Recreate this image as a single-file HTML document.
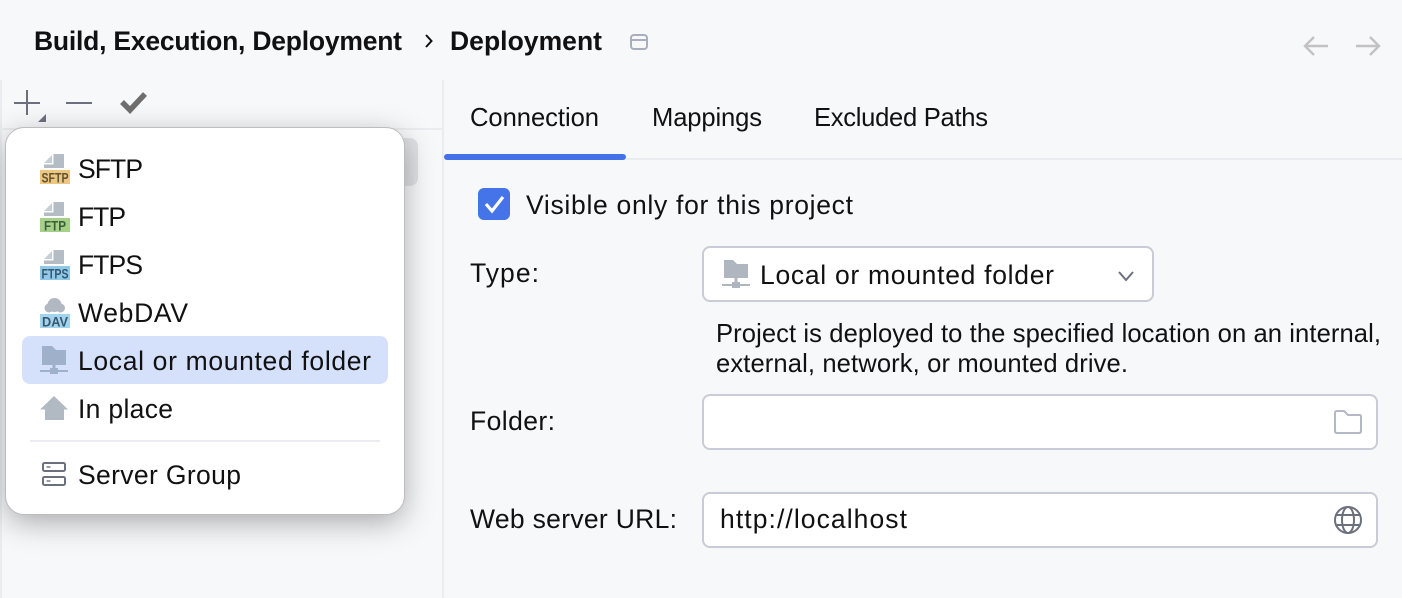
<!DOCTYPE html>
<html><head><meta charset="utf-8"><style>
html,body{margin:0;padding:0;background:#f7f8fa;width:1402px;height:598px;overflow:hidden}
svg{display:block}
text{font-family:"Liberation Sans",sans-serif;font-size:26.5px;fill:#111}
.t{font-size:25.6px}
.b{font-weight:700;font-size:26.5px;fill:#111}
.l{font-weight:700;font-size:13.5px}
</style></head><body>
<svg width="1402" height="598" viewBox="0 0 1402 598" xmlns="http://www.w3.org/2000/svg">
<defs>
<filter id="sh" x="-20%" y="-20%" width="140%" height="150%"><feDropShadow dx="0" dy="8" stdDeviation="15" flood-color="#000" flood-opacity=".32"/></filter>
<g id="doc"><path d="M53.500 154H64V168H44V164.500H53.500Z" fill="#b4bcc6"/><path d="M44 163L52 155V163Z" fill="#c8ced6"/></g>
</defs>
<rect width="1402" height="598" fill="#f7f8fa"/>
<rect x="0" y="80" width="2" height="518" fill="#ebecf0"/>
<!-- title -->
<text class="b" x="34" y="50" textLength="368" lengthAdjust="spacing">Build, Execution, Deployment</text>
<path d="M426 35L431.500 41L426 47" fill="none" stroke="#111" stroke-width="2"/>
<text class="b" x="450" y="50" textLength="152" lengthAdjust="spacing">Deployment</text>
<g fill="none" stroke="#a8aebd" stroke-width="2"><rect x="631" y="35" width="16" height="14" rx="3"/><path d="M631 40H647"/></g>
<g fill="none" stroke="#c2c2c2" stroke-width="2.400"><path d="M1305 46H1328M1314 37L1305 46L1314 55"/><path d="M1379 46H1356M1370 37L1379 46L1370 55"/></g>
<!-- dividers -->
<rect x="442" y="80" width="2" height="518" fill="#ebecf0"/>
<rect x="0" y="128" width="443" height="2" fill="#ebecf0"/>
<rect x="626" y="158" width="776" height="2" fill="#ebecf0"/>
<rect x="444" y="154" width="182" height="6" rx="3" fill="#4571e8"/>
<!-- toolbar -->
<path d="M14 103H40M27 90V115M66 103H92" stroke="#6c707e" stroke-width="2" fill="none"/>
<path d="M46 114V122H38Z" fill="#6c707e"/>
<path d="M122 102L130 110L145 94" stroke="#6e6e6e" stroke-width="5.500" fill="none"/>
<!-- tabs -->
<text class="t" x="470" y="126" textLength="129" lengthAdjust="spacing">Connection</text>
<text class="t" x="652" y="126" textLength="110" lengthAdjust="spacing">Mappings</text>
<text class="t" x="814" y="126" textLength="174" lengthAdjust="spacing">Excluded Paths</text>
<!-- list selection behind popup -->
<rect x="380" y="138" width="38" height="48" rx="8" fill="#dfe1e5"/>
<!-- popup -->
<rect x="6" y="128" width="398" height="386" rx="18" fill="#fff" filter="url(#sh)"/>
<rect x="5.500" y="127.500" width="399" height="387" rx="18.500" fill="#fff" stroke="#bdbdc0"/>
<rect x="22" y="336" width="366" height="48" rx="8" fill="#d5e1fb"/>
<!-- menu items -->
<use href="#doc"/>
<rect x="40" y="170" width="30" height="14" fill="#edc67f"/>
<text class="l" x="41.500" y="182.500" style="fill:#5f5238" textLength="27" lengthAdjust="spacingAndGlyphs">SFTP</text>
<text x="78" y="178" textLength="65" lengthAdjust="spacing">SFTP</text>
<use href="#doc" y="48"/>
<rect x="40" y="218" width="30" height="14" fill="#a5d08a"/>
<text class="l" x="44" y="230.500" style="fill:#3f5c3a" textLength="22" lengthAdjust="spacingAndGlyphs">FTP</text>
<text x="78" y="226" textLength="48" lengthAdjust="spacing">FTP</text>
<use href="#doc" y="96"/>
<rect x="40" y="266" width="30" height="14" fill="#90c9e8"/>
<text class="l" x="41.500" y="278.500" style="fill:#38566e" textLength="27" lengthAdjust="spacingAndGlyphs">FTPS</text>
<text x="78" y="274" textLength="65" lengthAdjust="spacing">FTPS</text>
<g fill="#b1b8c2"><circle cx="54.500" cy="305" r="7"/><circle cx="49" cy="308" r="4.500"/><circle cx="60.500" cy="308" r="4.500"/></g>
<rect x="40" y="314" width="30" height="14" fill="#a2d4ee"/>
<text class="l" x="42" y="326.500" style="fill:#38566e" textLength="26" lengthAdjust="spacingAndGlyphs">DAV</text>
<text x="78" y="322" textLength="110" lengthAdjust="spacing">WebDAV</text>
<path d="M42 346H52L56 350H66V365H55.500V368H58V370H68V372H58V374H50V372H40V370H50V368H52.500V365H42Z" fill="#9fb0cb"/>
<text x="78" y="370" textLength="293" lengthAdjust="spacing">Local or mounted folder</text>
<path d="M54 396L68 409.500H64V420H45V409.500H40Z" fill="#b1b9c3"/>
<text x="78" y="418" textLength="95" lengthAdjust="spacing">In place</text>
<rect x="30" y="440" width="350" height="2" fill="#ebecf0"/>
<g fill="none" stroke="#6c707e" stroke-width="2"><rect x="43" y="463" width="22" height="8" rx="1.500"/><rect x="43" y="477" width="22" height="8" rx="1.500"/></g>
<path d="M46.500 467H50.500M46.500 481H50.500" stroke="#9a9eaa" stroke-width="2" fill="none"/>
<text x="78" y="484" textLength="163" lengthAdjust="spacing">Server Group</text>
<!-- checkbox -->
<rect x="478" y="188" width="32" height="32" rx="6" fill="#4574e8"/>
<path d="M486 204L492 211L503 197" fill="none" stroke="#fff" stroke-width="3.200"/>
<text x="526" y="214" textLength="327" lengthAdjust="spacing">Visible only for this project</text>
<!-- type -->
<text x="470" y="282" textLength="69" lengthAdjust="spacing">Type:</text>
<rect x="703" y="247" width="450" height="54" rx="7" fill="#fff" stroke="#c9ccd6" stroke-width="2"/>
<path d="M724 260H733L737 264H748V278H737.500V282H740V284H750V286H740V288H732V286H722V284H732V282H734.500V278H724Z" fill="#afb6bf"/>
<text x="760" y="284" textLength="294" lengthAdjust="spacing">Local or mounted folder</text>
<path d="M1119 272L1126 280L1133 272" fill="none" stroke="#6c707e" stroke-width="2"/>
<text class="t" x="716" y="342" textLength="665" lengthAdjust="spacing">Project is deployed to the specified location on an internal,</text>
<text class="t" x="716" y="372" textLength="412" lengthAdjust="spacing">external, network, or mounted drive.</text>
<!-- folder -->
<text x="470" y="430" textLength="85" lengthAdjust="spacing">Folder:</text>
<rect x="703" y="395" width="674" height="54" rx="7" fill="#fff" stroke="#c9ccd6" stroke-width="2"/>
<path d="M1335 413Q1335 411 1337 411H1344L1348 415H1360Q1361 415 1361 417V431Q1361 433 1359 433H1337Q1335 433 1335 431Z" fill="none" stroke="#b5b9c5" stroke-width="2"/>
<!-- url -->
<text x="470" y="528" textLength="207" lengthAdjust="spacing">Web server URL:</text>
<rect x="703" y="493" width="674" height="54" rx="7" fill="#fff" stroke="#c9ccd6" stroke-width="2"/>
<text x="720" y="528" textLength="187" lengthAdjust="spacing">http://localhost</text>
<g fill="none" stroke="#6c707e" stroke-width="2"><circle cx="1348" cy="520" r="13"/><ellipse cx="1348" cy="520" rx="6" ry="13"/><path d="M1336.500 515H1359.500M1336.500 525H1359.500"/></g>
</svg>
</body></html>
